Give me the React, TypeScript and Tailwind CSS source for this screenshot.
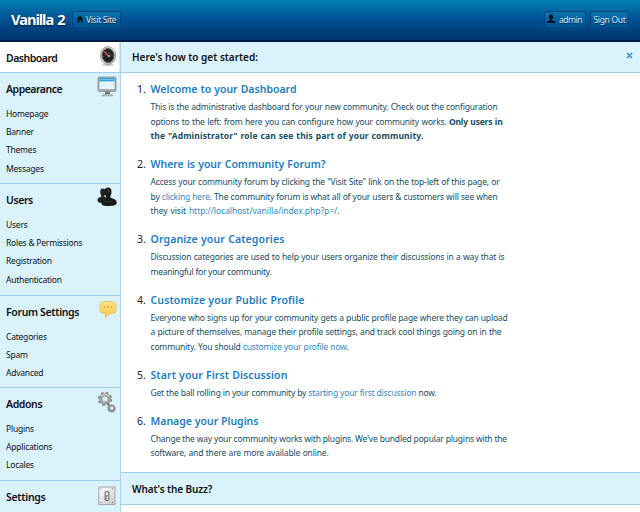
import React from "react";

const SECTIONS = [
  { title: "Appearance", h: "h-[111px]", icon: "monitor", track: "tracking-[-0.5px]", items: ["Homepage", "Banner", "Themes", "Messages"] },
  { title: "Users", h: "h-[112px]", icon: "users", track: "tracking-[-0.4px]", items: ["Users", "Roles & Permissions", "Registration", "Authentication"] },
  { title: "Forum Settings", h: "h-[92px]", icon: "chat", track: "tracking-[-0.35px]", items: ["Categories", "Spam", "Advanced"] },
  { title: "Addons", h: "h-[93px]", icon: "gears", track: "tracking-[-0.4px]", items: ["Plugins", "Applications", "Locales"] },
  { title: "Settings", h: "h-[40px]", icon: "switch", track: "tracking-[-0.3px]", items: [] },
];

function Line({ w, children }: { w: string; children: React.ReactNode }) {
  return <div className={`h-[14.5px] whitespace-nowrap leading-[14.5px] [text-align-last:justify] ${w}`}>{children}</div>;
}

function Link({ children }: { children: React.ReactNode }) {
  return <a className="text-[#3289c1]">{children}</a>;
}

function Step({ n, title, w, children }: { n: number; title: string; w: string; children: React.ReactNode }) {
  return (
    <li className="mb-[11.25px] flex">
      <span className="w-[13.5px] text-[10.5px] leading-[18px] text-[#222]">{n}.</span>
      <div>
        <h2 className={`mb-[2.25px] h-[18px] whitespace-nowrap text-[10.5px] font-semibold leading-[18px] text-[#1e7cbc] [text-align-last:justify] ${w}`}>{title}</h2>
        <div className="text-[8.5px] tracking-[-0.18px] text-[#164e64]">{children}</div>
      </div>
    </li>
  );
}

function Icon({ name }: { name: string }) {
  if (name === "gauge")
    return (
      <svg width="20" height="22" viewBox="0 0 20 22">
        <defs>
          <linearGradient id="rim" x1="0" y1="0" x2="1" y2="1"><stop stopColor="#aaa" /><stop offset=".5" stopColor="#eee" /><stop offset="1" stopColor="#888" /></linearGradient>
        </defs>
        <ellipse cx="10" cy="20" rx="6" ry="1" fill="#ccc" />
        <ellipse cx="10" cy="10.5" rx="7.7" ry="9" fill="url(#rim)" stroke="#8b8b8b" strokeWidth=".7" />
        <ellipse cx="10" cy="10.5" rx="5.9" ry="7" fill="#222" stroke="#555" />
        <path d="M5.5 12a4.6 5 0 0 1 9 0" fill="none" stroke="#777" strokeWidth=".8" strokeDasharray="1 1.2" />
        <path d="M6.5 6.5l3.8 4.5" stroke="#f04848" strokeWidth="1.4" />
        <circle cx="11" cy="11" r="1.3" fill="#999" />
      </svg>
    );
  if (name === "monitor")
    return (
      <svg width="20" height="22" viewBox="0 0 20 22">
        <path d="M8 14h5v4H8z" fill="#777" />
        <path d="M6 18.5h9l1 1.5H5z" fill="#b5bcbf" stroke="#8e979b" strokeWidth=".5" />
        <rect x="1" y="1" width="18" height="14.5" rx="1" fill="#a5abad" stroke="#838b8f" strokeWidth=".7" />
        <rect x="2.5" y="2" width="15" height="11" fill="#dff3fc" />
        <rect x="2.5" y="2" width="15" height="3.4" fill="#36a4df" />
        <path d="M4 3.5h12M4 8h5M11 7.5h5M4 10.5h5M11 10h5" stroke="#89cdec" strokeWidth=".8" />
        <path d="M4 6h12v6H4z" fill="#fff" opacity=".55" />
      </svg>
    );
  if (name === "users")
    return (
      <svg width="20" height="20" viewBox="0 0 20 20">
        <path d="M3.200 4.800q0-3.300 2.600-3.300t2.600 3.300q0 3-1 4v1l4 3v3H3Q.300 15.500.500 12.200q.200-1.600 3.700-2.400V8.600Q3.200 7.500 3.200 4.800z" fill="#242424" />
        <path d="M7.500 4.700Q7.500.600 11 .600t3.500 4.100q0 3.200-1.200 4.500v1.400l4.700 1.800q2 1 1.700 3.900-.300 2.700-7.700 2.700T4.400 16.400q0-2.900 1.600-3.900l2.800-1.700V9.200Q7.500 7.700 7.500 4.700z" fill="#181818" />
        <path d="M10 2.200q1-.8 1.800.5v3" stroke="#555" fill="none" />
        <path d="M7 14q4 2 8 0" stroke="#444" strokeWidth=".7" fill="none" />
      </svg>
    );
  if (name === "chat")
    return (
      <svg className="mt-[1px]" width="18" height="19" viewBox="0 0 18 19">
        <defs><linearGradient id="chat" x1="0" y1="0" x2="0" y2="1"><stop stopColor="#ffe48a" /><stop offset="1" stopColor="#f5cb45" /></linearGradient></defs>
        <path d="M4.500 1.500h9q3.500 0 3.500 3.500v5q0 3.500-3.500 3.500h-2.500L6.500 17.500V13.500h-2Q1 13.500 1 10V5q0-3.500 3.500-3.500z" fill="url(#chat)" stroke="#dfba65" strokeWidth=".8" />
        <path d="M4.500 7h1.800M8.100 7h1.800M11.700 7h1.800" stroke="#c8a347" strokeWidth="1.500" />
      </svg>
    );
  if (name === "gears")
    return (
      <svg width="20" height="23" viewBox="0 0 20 23">
        <circle cx="8" cy="8" r="6" fill="none" stroke="#858585" strokeWidth="2.400" strokeDasharray="2.500 2.210" />
        <circle cx="8" cy="8" r="4.300" fill="#d9eef6" stroke="#a0a0a0" strokeWidth="3.400" />
        <path d="M4.500 5Q8 2 11.500 5" stroke="#d8d8d8" fill="none" strokeWidth="1.200" />
        <path d="M10 12l3 3" stroke="#777" strokeWidth="1.200" />
        <circle cx="14.500" cy="17.500" r="3.500" fill="#999" stroke="#777" strokeWidth="1.200" strokeDasharray="1.500 .7" />
        <circle cx="14.800" cy="17" r="1.600" fill="#eee" />
      </svg>
    );
  return (
    <svg className="mt-[2px] mr-[1px]" width="18" height="20" viewBox="0 0 18 20">
      <defs><linearGradient id="plate" x1="0" y1="0" x2="1" y2="1"><stop stopColor="#fff" /><stop offset="1" stopColor="#c8c8c8" /></linearGradient></defs>
      <rect x=".8" y="1" width="16.200" height="17.500" fill="url(#plate)" stroke="#a5a5a5" />
      <path d="M2.500 3h1M14 3h1M2.500 16.500h1M14 16.500h1" stroke="#777" />
      <rect x="7" y="5.500" width="4" height="9" rx="1" fill="#999" stroke="#666" strokeWidth=".7" />
      <path d="M8 6.500h2v2.500H8z" fill="#eee" />
      <path d="M9.500 10v4" stroke="#ddd" />
    </svg>
  );
}

const BTN = "flex h-[18px] items-center whitespace-nowrap rounded-[2px] border border-[#00427e] bg-linear-to-b from-[#0874ad] to-[#00508f] text-[8.5px] text-[#d5e9f5] shadow-[0_0_1px_#2a8ac0] [text-shadow:0_1px_1px_#002048]";

export default function App() {
  return (
    <div className="flex h-[512px] w-[640px] flex-col overflow-hidden bg-white font-['Noto_Sans','Open_Sans',sans-serif] text-[#111]">
      <header className="flex h-[42px] shrink-0 items-start border-b-2 border-[#001b44] bg-linear-to-b from-[#007fb0] via-[#005596] via-45% to-[#00326b] pr-[11px] pl-[11px]">
        <h1 className="mt-[9px] w-[61px] whitespace-nowrap font-['Open_Sans',sans-serif] text-[14.5px] font-bold leading-[21px] tracking-[-1.1px] text-white [text-shadow:0_1px_2px_#001b44] [word-spacing:1.500px]">Vanilla 2</h1>
        <a className={`mt-[11px] w-[49px] pl-[3px] ${BTN}`}>
          <svg className="mr-[2px] mb-[2px]" width="8" height="8" viewBox="0 0 8 8"><path d="M4 .5L7.500 4h-1v3.500H4.700V5H3.500v2.500H1.500V4h-1z" fill="#001225" /></svg>
          <span className="tracking-[-0.35px]">Visit Site</span>
        </a>
        <div className="mt-[11px] ml-auto flex gap-[4px]">
          <a className={`w-[42px] pl-[2px] ${BTN}`}>
            <svg className="mr-[4px] mb-[3px]" width="8" height="10" viewBox="0 0 8 10"><path d="M4 .5q2.200 0 2.200 2.300Q6.200 4.500 5 5.500v1l3 .8V9H0V7.300l3-.8v-1q-1.200-1-1.200-2.700Q1.800.5 4 .5z" fill="#00101f" /></svg>
            <span className="tracking-[-0.45px]">admin</span>
          </a>
          <a className={`w-[39px] justify-center tracking-[-0.3px] ${BTN}`}>Sign Out</a>
        </div>
      </header>
      <div className="flex min-h-0 flex-1">
        <aside className="w-[121px] shrink-0 border-r border-[#a9d6ee] bg-[#daf2fc]">
          <div className="flex h-[30px] justify-between border-r border-[#d0ecf8] bg-white pr-[1px] pl-[6px]">
            <h3 className="text-[10.5px] font-semibold leading-[32px] tracking-[-0.5px]">Dashboard</h3>
            <div className="mt-[3px]"><Icon name="gauge" /></div>
          </div>
          {SECTIONS.map((s) => (
            <section key={s.title} className={`border-t border-[#9fceea] pr-[3px] pl-[6px] ${s.h}`}>
              <div className="flex h-[32px] items-start justify-between">
                <h3 className={`whitespace-nowrap text-[10.500px] font-semibold leading-[33px] ${s.track}`}>{s.title}</h3>
                <div className="mt-[3px]"><Icon name={s.icon} /></div>
              </div>
              <ul className="text-[8.500px] leading-[18.200px] tracking-[-0.22px]">
                {s.items.map((t) => <li key={t} className="h-[18.200px] whitespace-nowrap">{t}</li>)}
              </ul>
            </section>
          ))}
        </aside>
        <main className="flex-1">
          <div className="flex h-[31px] items-center justify-between border-b border-[#9fceea] bg-[#daf2fc] pr-[7px] pl-[11px]">
            <h3 className="mt-[1px] text-[10px] font-semibold">Here&apos;s how to get started:</h3>
            <svg className="mb-[4px]" width="7" height="7" viewBox="0 0 7 7"><path d="M1 1l5 5M6 1l-5 5" stroke="#3e96c8" strokeWidth="1.700" /></svg>
          </div>
          <ol className="h-[399px] pt-[7px] pl-[16px]">
            <Step n={1} title="Welcome to your Dashboard" w="w-[146px]">
              <Line w="w-[347px]">This is the administrative dashboard for your new community. Check out the configuration</Line>
              <Line w="w-[352px] tracking-[-0.2px]">options to the left: from here you can configure how your community works. <b>Only users in</b></Line>
              <Line w="w-[273px]"><b className="tracking-[0.15px]">the &quot;Administrator&quot; role can see this part of your community.</b></Line>
            </Step>
            <Step n={2} title="Where is your Community Forum?" w="w-[175px] tracking-[-0.03px]">
              <Line w="w-[349px]">Access your community forum by clicking the &quot;Visit Site&quot; link on the top-left of this page, or</Line>
              <Line w="w-[347px]">by <Link>clicking here</Link>. The community forum is what all of your users &amp; customers will see when</Line>
              <Line w="w-[189px] tracking-[-0.04px]">they visit <Link>http://localhost/vanilla/index.php?p=/</Link>.</Line>
            </Step>
            <Step n={3} title="Organize your Categories" w="w-[134px] tracking-[0.12px]">
              <Line w="w-[354px]">Discussion categories are used to help your users organize their discussions in a way that is</Line>
              <Line w="w-[121px] tracking-[-0.28px]">meaningful for your community.</Line>
            </Step>
            <Step n={4} title="Customize your Public Profile" w="w-[154px] tracking-[0.12px]">
              <Line w="w-[357px]">Everyone who signs up for your community gets a public profile page where they can upload</Line>
              <Line w="w-[351px]">a picture of themselves, manage their profile settings, and track cool things going on in the</Line>
              <Line w="w-[198px]">community. You should <Link>customize your profile now</Link>.</Line>
            </Step>
            <Step n={5} title="Start your First Discussion" w="w-[137px] tracking-[0.1px]">
              <Line w="w-[286px]">Get the ball rolling in your community by <Link>starting your first discussion</Link> now.</Line>
            </Step>
            <Step n={6} title="Manage your Plugins" w="w-[108px]">
              <Line w="w-[356px]">Change the way your community works with plugins. We&apos;ve bundled popular plugins with the</Line>
              <Line w="w-[178px]">software, and there are more available online.</Line>
            </Step>
          </ol>
          <div className="flex h-[33px] items-center border-y border-[#9fceea] bg-[#daf2fc] pl-[11px]">
            <h3 className="mt-[1px] text-[10px] font-semibold tracking-[-0.1px]">What&apos;s the Buzz?</h3>
          </div>
        </main>
      </div>
    </div>
  );
}
